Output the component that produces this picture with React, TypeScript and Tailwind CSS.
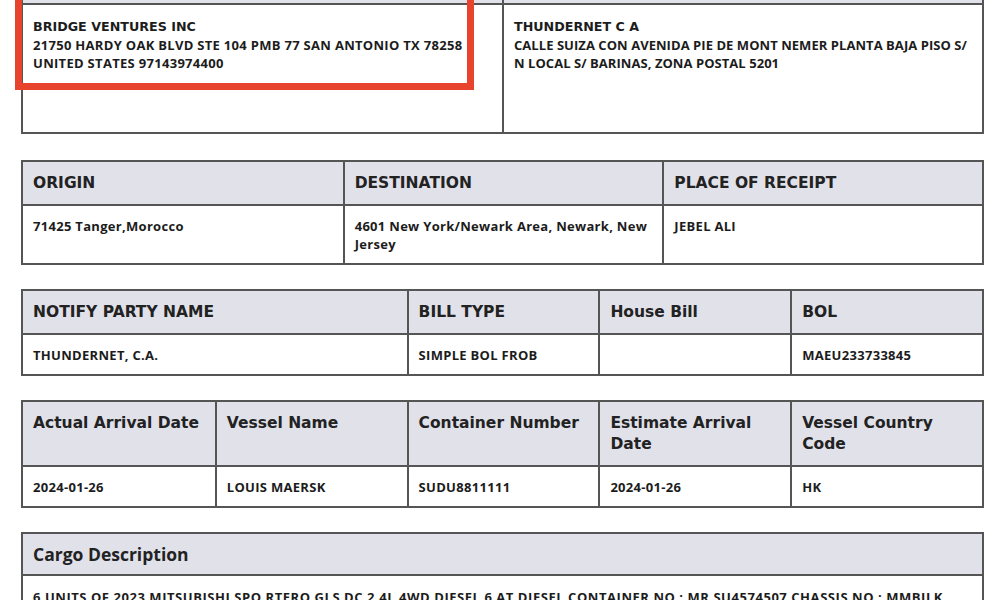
import React from 'react';

const head = 'bg-[#e1e1ea] px-[10px] pt-[11px] pb-[10px] text-[15.5px] leading-[21px] font-bold text-[#222] [font-family:"DejaVu_Sans",sans-serif]';
const cell = 'px-[10px] pt-[11px] pb-[10px] text-[13px] tracking-[0.3px] leading-[18px] font-bold text-[#1c1c1c] [font-family:"Open_Sans",sans-serif]';

function Table({ cols, heads, values }: { cols: string; heads: string[]; values: string[] }) {
  return (
    <div className={`grid ${cols} border-2 border-[#555] ml-[21px] w-[963px]`}>
      {heads.map((h, i) => (
        <div key={h} className={`${head} border-b-2 border-[#555] ${i > 0 ? 'border-l-2' : ''}`}>
          {h}
        </div>
      ))}
      {values.map((v, i) => (
        <div key={i} className={`${cell} border-[#555] ${i > 0 ? 'border-l-2' : ''}`}>
          {v}
        </div>
      ))}
    </div>
  );
}

export default function App() {
  return (
    <div className="relative w-[1000px] h-[600px] overflow-hidden bg-white">
      <div className="flex flex-col gap-[24px]">
        {/* parties */}
        <div className="grid grid-cols-[479px_1fr] border-x-2 border-b-2 border-[#555] ml-[21px] w-[963px] mb-[2px]">
          <div className="h-[5px] bg-[#e1e1ea] border-b-2 border-[#555]" />
          <div className="h-[5px] bg-[#e1e1ea] border-b-2 border-l-2 border-[#555]" />
          <div className="h-[127px] px-[10px] pt-[13px] text-[#1c1c1c] leading-[18px] font-bold [font-family:'Open_Sans',sans-serif] text-[13px] tracking-[0.3px]">
            <div className="text-[12.7px] tracking-normal [font-family:'DejaVu_Sans',sans-serif]">BRIDGE VENTURES INC</div>
            <div>21750 HARDY OAK BLVD STE 104 PMB 77 SAN ANTONIO TX 78258</div>
            <div>UNITED STATES 97143974400</div>
          </div>
          <div className="h-[127px] border-l-2 border-[#555] px-[10px] pt-[13px] text-[#1c1c1c] leading-[18px] font-bold [font-family:'Open_Sans',sans-serif] text-[13px] tracking-[0.05px]">
            <div className="text-[12.7px] tracking-normal [font-family:'DejaVu_Sans',sans-serif]">THUNDERNET C A</div>
            <div>CALLE SUIZA CON AVENIDA PIE DE MONT NEMER PLANTA BAJA PISO S/ N LOCAL S/ BARINAS, ZONA POSTAL 5201</div>
          </div>
        </div>

        <Table
          cols="grid-cols-3"
          heads={['ORIGIN', 'DESTINATION', 'PLACE OF RECEIPT']}
          values={['71425 Tanger,Morocco', '4601 New York/Newark Area, Newark, New Jersey', 'JEBEL ALI']}
        />

        <Table
          cols="grid-cols-[2fr_1fr_1fr_1fr]"
          heads={['NOTIFY PARTY NAME', 'BILL TYPE', 'House Bill', 'BOL']}
          values={['THUNDERNET, C.A.', 'SIMPLE BOL FROB', '', 'MAEU233733845']}
        />

        <Table
          cols="grid-cols-5"
          heads={['Actual Arrival Date', 'Vessel Name', 'Container Number', 'Estimate Arrival Date', 'Vessel Country Code']}
          values={['2024-01-26', 'LOUIS MAERSK', 'SUDU8811111', '2024-01-26', 'HK']}
        />

        <div className="border-2 border-[#555] ml-[21px] w-[963px]">
          <div className="bg-[#e1e1ea] border-b-2 border-[#555] px-[10px] py-[9px] text-[17.5px] leading-[22px] font-bold text-[#222] [font-family:'Open_Sans',sans-serif]">
            Cargo Description
          </div>
          <div className="px-[10px] pt-[12px] pb-[10px] text-[13px] tracking-[0.55px] leading-[18px] font-bold text-[#1c1c1c] whitespace-nowrap [font-family:'Open_Sans',sans-serif]">
            6 UNITS OF 2023 MITSUBISHI SPO RTERO GLS DC 2.4L 4WD DIESEL 6 AT DIESEL CONTAINER NO : MR SU4574507 CHASSIS NO : MMBJLK
          </div>
        </div>
      </div>

      {/* highlight annotation */}
      <div className="absolute left-[15px] top-[-20px] w-[459px] h-[110px] border-[7px] border-[#e8432d]" />
    </div>
  );
}
